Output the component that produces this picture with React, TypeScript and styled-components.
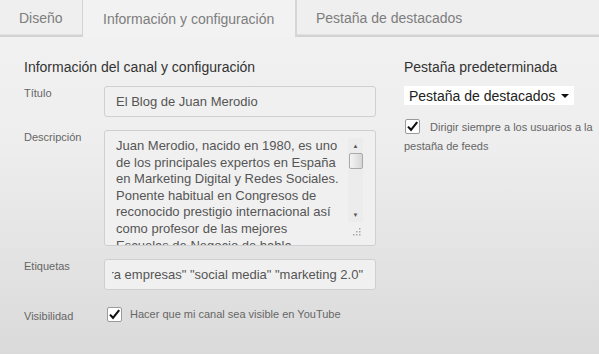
import React from "react";
import styled, { createGlobalStyle } from "styled-components";

const GlobalStyle = createGlobalStyle`
  html, body {
    margin: 0;
    padding: 0;
  }
  body {
    font-family: "Liberation Sans", Arial, sans-serif;
    background: #dcdcdc;
  }
`;

const tabs = [
  { label: "Diseño", width: 82 },
  { label: "Información y configuración", width: 215 },
  { label: "Pestaña de destacados", width: 0 },
];
const activeTab = 1;

const description =
  "Juan Merodio, nacido en 1980, es uno de los principales expertos en España en Marketing Digital y Redes Sociales. Ponente habitual en Congresos de reconocido prestigio internacional así como profesor de las mejores Escuelas de Negocio de habla hispana.";

const tags = '"marketing para empresas" "social media" "marketing 2.0"';

const Check = () => (
  <SCheckBox>
    <svg width="13" height="13" viewBox="0 0 13 13">
      <path d="M2 6.6 L5 9.8 L11.2 2.2" fill="none" stroke="#111" strokeWidth="2.1" />
    </svg>
  </SCheckBox>
);

export default function App() {
  return (
    <>
      <GlobalStyle />
      <SPage>
        <STabBar>
          {tabs.map((t, i) => (
            <STab key={t.label} $active={i === activeTab} $width={t.width}>
              {t.label}
            </STab>
          ))}
        </STabBar>
        <SBody>
          <SMain>
            <SHeading>Información del canal y configuración</SHeading>
            <SRow>
              <SLabel>Título</SLabel>
              <SInput>El Blog de Juan Merodio</SInput>
            </SRow>
            <SRow>
              <SLabel>Descripción</SLabel>
              <STextArea>
                <STextContent>{description}</STextContent>
                <SScrollbar>
                  <SArrow>▲</SArrow>
                  <SThumb />
                  <STrack />
                  <SArrow>▼</SArrow>
                </SScrollbar>
                <SGrip>
                  <svg width="8" height="8" viewBox="0 0 8 8">
                    {[[6, 0], [6, 3], [3, 3], [6, 6], [3, 6], [0, 6]].map(([x, y]) => (
                      <rect key={`${x}-${y}`} x={x} y={y} width="1.5" height="1.5" fill="#a8a8a8" />
                    ))}
                  </svg>
                </SGrip>
              </STextArea>
            </SRow>
            <SRow>
              <SLabel>Etiquetas</SLabel>
              <STagInput>
                <STagClip>
                  <span>{tags}</span>
                </STagClip>
              </STagInput>
            </SRow>
            <SRow>
              <SLabel $top={7}>Visibilidad</SLabel>
              <SCheckRow>
                <Check />
                <SCheckText>Hacer que mi canal sea visible en YouTube</SCheckText>
              </SCheckRow>
            </SRow>
          </SMain>
          <SSide>
            <SHeading>Pestaña predeterminada</SHeading>
            <SSelect>
              <span>Pestaña de destacados</span>
              <SCaret />
            </SSelect>
            <SSideOption>
              <SFloatCheck>
                <Check />
              </SFloatCheck>
              Dirigir siempre a los usuarios a la pestaña de feeds
            </SSideOption>
          </SSide>
        </SBody>
      </SPage>
    </>
  );
}

const SPage = styled.div`
  width: 599px;
  height: 354px;
  overflow: hidden;
  background: linear-gradient(to bottom, #f2f2f2 0%, #eeeeee 40%, #dadada 100%);
`;

const STabBar = styled.div`
  display: flex;
  height: 37px;
`;

const STab = styled.div<{ $active: boolean; $width: number }>`
  box-sizing: border-box;
  height: 37px;
  display: flex;
  align-items: center;
  white-space: nowrap;
  ${(p) => (p.$width ? `width: ${p.$width}px; flex: none;` : "flex: 1;")}
  padding: 0 0 0 ${(p) => (p.$active ? 20 : 19)}px;
  font-size: 14px;
  color: #7d7d7d;
  background: ${(p) => (p.$active ? "#f2f2f2" : "#efefef")};
  border-bottom: ${(p) => (p.$active ? "none" : "2px solid #d2d2d2")};
  box-shadow: ${(p) => (p.$active ? "none" : "inset 0 -3px 0 -2px #e2e2e2")};
  border-left: ${(p) => (p.$active ? "1px solid #d3d3d3" : "none")};
  border-right: ${(p) => (p.$active ? "2px solid #d6d6d6" : "none")};
`;

const SBody = styled.div`
  display: flex;
  padding: 22px 0 0 24px;
`;

const SMain = styled.div`
  width: 352px;
  display: flex;
  flex-direction: column;
`;

const SSide = styled.div`
  margin-left: 28px;
  width: 190px;
  display: flex;
  flex-direction: column;
`;

const SHeading = styled.div`
  font-size: 14px;
  color: #333;
  line-height: 16px;
  margin-bottom: 11px;
`;

const SRow = styled.div`
  display: flex;
  margin-bottom: 13px;
`;

const SLabel = styled.div<{ $top?: number }>`
  width: 80px;
  flex: none;
  font-size: 11px;
  line-height: 13px;
  color: #666;
  padding-top: ${(p) => p.$top ?? 1}px;
`;

const SField = styled.div`
  box-sizing: border-box;
  width: 272px;
  border: 1px solid #cfcfcf;
  border-radius: 3px;
  background: #f0f0f0;
  color: #555;
  font-size: 13px;
`;

const SInput = styled(SField)`
  height: 31px;
  display: flex;
  align-items: center;
  padding: 0 11px;
`;

const STagInput = styled(SInput)`
  padding: 0 12px 0 7px;
`;

const STagClip = styled.div`
  flex: 1;
  min-width: 0;
  display: flex;
  justify-content: flex-end;
  overflow: hidden;
  white-space: nowrap;
  span {
    flex-shrink: 0;
  }
`;

const STextArea = styled(SField)`
  position: relative;
  height: 116px;
  overflow: hidden;
  padding: 7px 35px 0 11px;
`;

const STextContent = styled.div`
  line-height: 16.6px;
`;

const SScrollbar = styled.div`
  position: absolute;
  top: 7px;
  right: 12px;
  width: 15px;
  height: 84px;
  display: flex;
  flex-direction: column;
  background: #ececec;
`;

const SArrow = styled.div`
  height: 15px;
  font-size: 6px;
  color: #555;
  display: flex;
  align-items: center;
  justify-content: center;
`;

const SThumb = styled.div`
  box-sizing: border-box;
  height: 16px;
  margin: 0 0 0 1px;
  border: 1px solid #a9a9a9;
  border-radius: 2px;
  background: linear-gradient(to right, #f4f4f4, #d6d6d6);
`;

const STrack = styled.div`
  flex: 1;
`;

const SGrip = styled.div`
  position: absolute;
  right: 14px;
  bottom: 9px;
  line-height: 0;
`;

const SCheckRow = styled.div`
  display: flex;
  align-items: center;
  padding-left: 3px;
  padding-top: 2px;
`;

const SCheckBox = styled.span`
  box-sizing: border-box;
  width: 15px;
  height: 15px;
  border: 1px solid #9a9a9a;
  border-radius: 2px;
  background: #fff;
  display: inline-flex;
  align-items: center;
  justify-content: center;
`;

const SCheckText = styled.span`
  margin-left: 8px;
  font-size: 11px;
  color: #666;
`;

const SSelect = styled.div`
  box-sizing: border-box;
  width: 170px;
  height: 19px;
  background: #fff;
  display: flex;
  align-items: center;
  justify-content: space-between;
  padding: 0 5px 0 5px;
  font-size: 14px;
  color: #222;
`;

const SCaret = styled.span`
  width: 0;
  height: 0;
  border-left: 4px solid transparent;
  border-right: 4px solid transparent;
  border-top: 4px solid #111;
`;

const SSideOption = styled.div`
  margin-top: 13px;
  font-size: 11px;
  color: #666;
  line-height: 19px;
`;

const SFloatCheck = styled.span`
  float: left;
  margin: 1px 10px 0 1px;
  line-height: 0;
`;
